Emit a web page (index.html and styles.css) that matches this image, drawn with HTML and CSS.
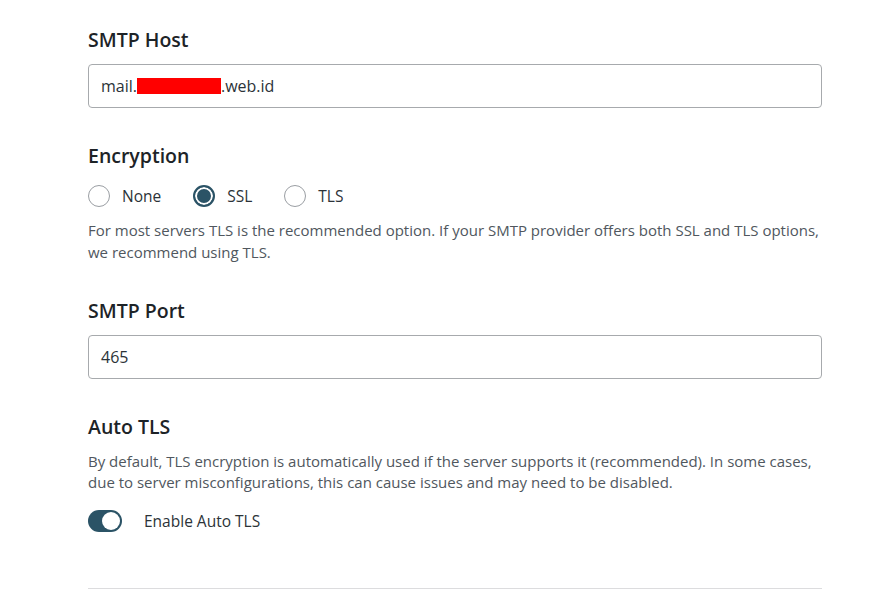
FILE: index.html
```html
<!DOCTYPE html>
<html lang="en">
<head>
  <meta charset="UTF-8">
  <title>SMTP Settings</title>
  <link rel="stylesheet" href="styles.css">
</head>
<body>

  <div class="settings">

    <div class="field">
      <h2 class="field-title">SMTP Host</h2>
      <div class="text-input">mail.<span class="redacted"></span>.web.id</div>
    </div>

    <div class="field">
      <h2 class="field-title">Encryption</h2>
      <div class="radio-row">
        <label class="radio"><span class="radio-dot"></span>None</label>
        <label class="radio"><span class="radio-dot checked"></span>SSL</label>
        <label class="radio"><span class="radio-dot"></span>TLS</label>
      </div>
      <p class="help">For most servers TLS is the recommended option. If your SMTP provider offers both SSL and TLS options, we recommend using TLS.</p>
    </div>

    <div class="field">
      <h2 class="field-title">SMTP Port</h2>
      <div class="text-input">465</div>
    </div>

    <div class="field">
      <h2 class="field-title">Auto TLS</h2>
      <p class="help help-tight">By default, TLS encryption is automatically used if the server supports it (recommended). In some cases, due to server misconfigurations, this can cause issues and may need to be disabled.</p>
      <label class="toggle-row"><span class="toggle"><span class="knob"></span></span>Enable Auto TLS</label>
    </div>

    <hr class="divider">
  </div>

</body>
</html>
```

FILE: styles.css
```css
body {
  margin: 0;
  background: #ffffff;
  font-family: "Open Sans", "Noto Sans", sans-serif;
  color: #1d2327;
}
.settings {
  width: 734px;
  padding: 27px 0 0 88px;
}
.field {
  margin-bottom: 35px;
}
.field-title {
  margin: 0 0 11px;
  font-size: 19.5px;
  line-height: 26px;
  font-weight: 600;
  color: #1d2327;
}
.text-input {
  box-sizing: border-box;
  height: 44px;
  border: 1px solid #a7aaad;
  border-radius: 4px;
  padding: 0 12px;
  display: flex;
  align-items: center;
  font-size: 16px;
  color: #2c3338;
}
.redacted {
  display: inline-block;
  width: 84px;
  height: 16px;
  background: #ff0000;
}
.radio-row {
  display: flex;
  gap: 32px;
  margin-top: 15px;
  height: 24px;
  align-items: center;
}
.radio {
  display: flex;
  align-items: center;
  gap: 12px;
  font-size: 15.5px;
  color: #2c3338;
}
.radio-dot {
  box-sizing: border-box;
  width: 22px;
  height: 22px;
  border-radius: 50%;
  border: 1px solid #9a9ea3;
  background: #fff;
}
.radio-dot.checked {
  border: 2px solid #2b5366;
  background: #2b5366;
  box-shadow: inset 0 0 0 2px #fff;
}
.help {
  margin: 11px 0 0;
  font-size: 15px;
  line-height: 22px;
  color: #50575e;
}
.help-tight {
  margin-top: 10px;
  line-height: 21px;
}
.toggle-row {
  display: flex;
  align-items: center;
  gap: 22px;
  margin-top: 17px;
  font-size: 15.5px;
  color: #2c3338;
}
.toggle {
  display: flex;
  justify-content: flex-end;
  align-items: center;
  width: 34px;
  height: 22px;
  padding: 0 2px;
  box-sizing: border-box;
  border-radius: 11px;
  background: #2b5366;
}
.knob {
  width: 18px;
  height: 18px;
  border-radius: 50%;
  background: #fff;
}
.divider {
  margin: 56px 0 0;
  border: 0;
  border-top: 1px solid #dcdcde;
}
```
